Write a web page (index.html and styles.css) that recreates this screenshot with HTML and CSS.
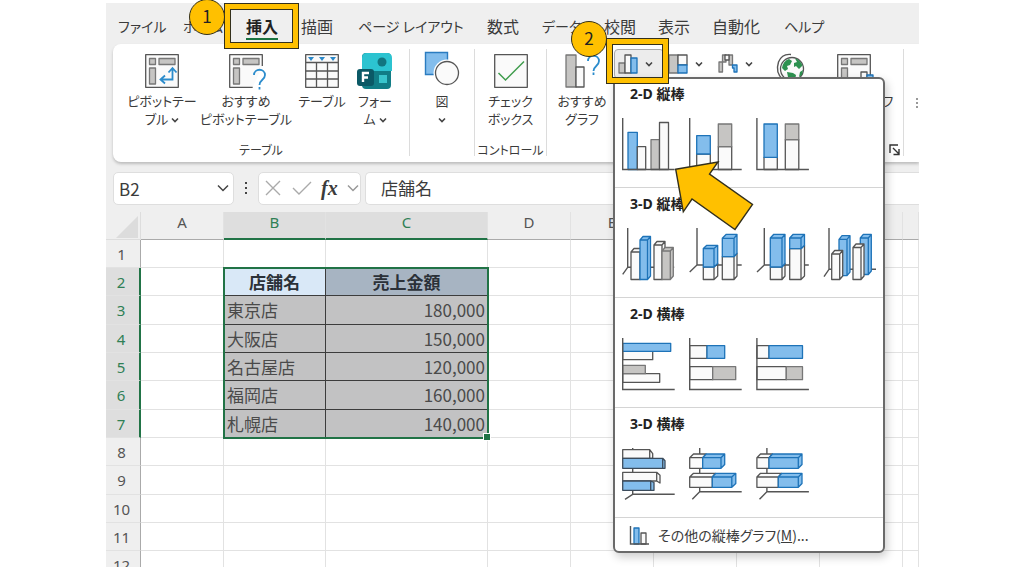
FILE: index.html
```html
<!DOCTYPE html>
<html lang="ja">
<head>
<meta charset="utf-8">
<title>売上金額</title>
<link rel="stylesheet" href="styles.css">
</head>
<body>
<main class="page">
  <div class="app">
    <nav class="tabs">
      <button class="tab kana">ファイル</button>
      <button class="tab kana">ホーム</button>
      <button class="tab active">挿入</button>
      <button class="tab">描画</button>
      <button class="tab kana">ページ レイアウト</button>
      <button class="tab">数式</button>
      <button class="tab kana">データ</button>
      <button class="tab">校閲</button>
      <button class="tab">表示</button>
      <button class="tab">自動化</button>
      <button class="tab kana">ヘルプ</button>
    </nav>

    <div class="ribbon">
      <section class="group tables">
        <div class="tools">
          <button class="tool">
            <svg class="icon" viewBox="0 0 34 34"><rect class="w" x=".7" y=".7" width="32.6" height="32.6"/><path class="g" d="M4.500 4.500h6v6h-6zM14 4.500h16v6H14zM4.500 14h6v16h-6z"/><path class="bl" d="M16 25.500h11.500V15M20 21.500l-4.500 4 4.500 4M23.500 18.500l4-4.500 4 4.500"/></svg>
            <span>ピボットテー<br>ブル <svg class="chev" viewBox="0 0 8 6"><path d="M1 1.500l3 3 3-3"/></svg></span>
          </button>
          <button class="tool wide">
            <svg class="icon" viewBox="0 0 34 34"><path class="w" d="M33.300 12V.7H.7v32.600h23"/><path class="g" d="M4.500 4.500h6v6h-6zM14 4.500h16v6H14zM4.500 14h6v16h-6z"/><path class="bl" d="M25 21c0-7 11-7 11 0 0 5-5.500 4.500-5.500 10M30.500 33v2.500"/></svg>
            <span>おすすめ<br>ピボットテーブル</span>
          </button>
          <button class="tool mid">
            <svg class="icon" viewBox="0 0 34 34"><path class="w" d="M.7.7h32.600v32.600H.7zM.7 8.500h32.600M.7 17h32.600M.7 25h32.600M11.500 8.500v25M22.500 8.500v25"/><path fill="#2b88c8" d="M3 3h6L6 7zM14 3h6l-3 4zM25 3h6l-3 4z"/></svg>
            <span>テーブル</span>
          </button>
          <button class="tool small">
            <svg class="icon" viewBox="0 0 34 34"><rect x="4" y="-1" width="29" height="36" rx="4" fill="#117d86"/><path d="M9-1h20q5 0 5 5v13H4V4q0-5 5-5z" fill="#2cc3d0"/><circle cx="24" cy="8" r="4.500" fill="#12757f"/><path d="M21 21h8v8h-8z" fill="#39c5cc"/><rect x="-1" y="15" width="17" height="17" rx="3" fill="#0b5966"/><path d="M5 28v-9h6M5 23.500h5" fill="none" stroke="#fff" stroke-width="2.400"/></svg>
            <span>フォー<br>ム <svg class="chev" viewBox="0 0 8 6"><path d="M1 1.500l3 3 3-3"/></svg></span>
          </button>
        </div>
        <h2 class="caption">テーブル</h2>
      </section>
      <section class="group shapes">
        <div class="tools">
          <button class="tool">
            <svg class="icon" viewBox="0 0 34 34"><path fill="#83bdec" stroke="#2b7cc0" stroke-width="1.400" d="M.5-1.500h22v22H.5z"/><circle cx="22" cy="19" r="13.500" fill="#fff"/><circle class="w" cx="22" cy="19" r="11.500"/></svg>
            <span>図<br><svg class="chev" viewBox="0 0 8 6"><path d="M1 1.500l3 3 3-3"/></svg></span>
          </button>
        </div>
      </section>
      <section class="group controls">
        <div class="tools">
          <button class="tool">
            <svg class="icon" viewBox="0 0 34 34"><path class="w" d="M.7.7h32.600v32.600H.7z"/><path fill="none" stroke="#3f9c4d" stroke-width="1.500" d="M4.500 19l7 7L30 7.500"/></svg>
            <span>チェック<br>ボックス</span>
          </button>
        </div>
        <h2 class="caption">コントロール</h2>
      </section>
      <section class="group charts">
        <div class="tools">
          <button class="tool rec">
            <svg class="icon" viewBox="0 0 34 34"><path class="g" d="M1 1h10v32H1z"/><path class="w" d="M11 13h8v20h-8z"/><path class="bl" d="M23 7c0-7 11-7 11 0 0 5-5.500 5-5.500 10M28.500 18.500V21"/></svg>
            <span>おすすめ<br>グラフ</span>
          </button>
          <button class="mini open" aria-label="縦棒/横棒グラフの挿入">
            <svg class="minicon" viewBox="0 0 20 20"><path class="g" d="M1 9h6v10H1z"/><path class="w" d="M7 1h6v18H7z"/><path class="b" d="M13 4h6v15h-6z"/></svg>
            <svg class="chev" viewBox="0 0 8 6"><path d="M1 1.500l3 3 3-3"/></svg>
          </button>
          <button class="mini" aria-label="階層構造グラフの挿入">
            <svg class="minicon" viewBox="0 0 20 20"><path class="g" d="M1 1h9v18H1z"/><path class="w" d="M10 1h9v10h-9z"/><path class="b" d="M10 11h9v8h-9z"/></svg>
            <svg class="chev" viewBox="0 0 8 6"><path d="M1 1.500l3 3 3-3"/></svg>
          </button>
          <button class="mini" aria-label="ウォーターフォール図の挿入">
            <svg class="minicon" viewBox="0 0 20 20"><path class="g" d="M1 8h3.500v10H1zM4.500 1H8v7H4.500zM11 1h3.500v10H11z"/><path class="w" d="M7 1h4v5H7z"/><path class="b" d="M14.500 11H19v7h-3v-4h-1.500z"/></svg>
            <svg class="chev" viewBox="0 0 8 6"><path d="M1 1.500l3 3 3-3"/></svg>
          </button>
          <button class="tool map" aria-label="マップ">
            <svg class="icon" viewBox="0 0 34 34"><circle class="w" cx="17" cy="15" r="11.500"/><path fill="#2d9150" d="M7 14q1-7 7-9l3 2-2 4-3 1 1 3-3 2zM20 4.500q5 1 7.500 7L24 15l-3-3-2 1v-4l3-1zM12 18l6 1 3 2-1 5h-5l-2-3zM25 18l3-2-1 5-3 2z"/><path class="n" d="M16 .5Q7-.5 3.500 8 0 19 8 25.500"/></svg>
          </button>
          <button class="tool pivotchart">
            <svg class="icon" viewBox="0 0 34 34"><path class="w" d="M.7.7h32.600v32.600H.7z"/><path class="g" d="M4.500 4.500h6v6h-6zM14 4.500h16v6H14zM4.500 14h6v16h-6z"/><path class="w" d="M24 18h6v15h-6z"/><path class="b" d="M30 21h6v12h-6z"/></svg>
            <span>ピボットグラフ</span>
          </button>
        </div>
        <h2 class="caption">グラフ</h2>
        <button class="launcher" aria-label="グラフの詳細"><svg viewBox="0 0 12 12"><path d="M1 9V1h8M4 4l6 6M10 5v5.500H4.500"/></svg></button>
      </section>
      <svg class="more" viewBox="0 0 3 12"><path d="M0 1h2v2H0zM0 5h2v2H0zM0 9h2v2H0z"/></svg>
    </div>

    <div class="formula-bar">
      <div class="box name-box">
        <input class="name-input" value="B2" aria-label="名前ボックス">
        <svg class="drop" viewBox="0 0 12 8"><path d="M1 1.500l5 5 5-5"/></svg>
      </div>
      <svg class="dots" viewBox="0 0 4 14"><path d="M1 1h2v2H1zM1 6h2v2H1zM1 11h2v2H1z"/></svg>
      <div class="box fx-box">
        <button class="fx-btn" aria-label="キャンセル"><svg viewBox="0 0 20 16"><path d="M3 1l14 14M17 1L3 15"/></svg></button>
        <button class="fx-btn" aria-label="入力"><svg viewBox="0 0 20 16"><path d="M1 8l6 6L19 2"/></svg></button>
        <button class="fx">fx</button>
        <svg class="drop pale" viewBox="0 0 12 8"><path d="M1 1.500l5 5 5-5"/></svg>
      </div>
      <input class="box formula" value="店舗名" aria-label="数式バー">
    </div>

    <div class="sheet">
      <table class="grid">
        <colgroup><col class="c-head"><col class="c-std"><col class="c-b"><col class="c-c"><col class="c-std"><col class="c-std"><col class="c-std"><col class="c-std"><col class="c-std"><col></colgroup>
        <thead><tr><th class="corner"><svg viewBox="0 0 22 22"><path d="M22 0v22H0z"/></svg></th><th>A</th><th class="sel">B</th><th class="sel">C</th><th>D</th><th>E</th><th>F</th><th>G</th><th>H</th><th></th></tr></thead>
        <tbody>
          <tr><th>1</th><td></td><td></td><td></td><td></td><td></td><td></td><td></td><td></td><td></td></tr>
          <tr><th class="sel">2</th><td></td><td class="title first">店舗名</td><td class="title">売上金額</td><td></td><td></td><td></td><td></td><td></td><td></td></tr>
          <tr><th class="sel">3</th><td></td><td class="data">東京店</td><td class="data num">180,000</td><td></td><td></td><td></td><td></td><td></td><td></td></tr>
          <tr><th class="sel">4</th><td></td><td class="data">大阪店</td><td class="data num">150,000</td><td></td><td></td><td></td><td></td><td></td><td></td></tr>
          <tr><th class="sel">5</th><td></td><td class="data">名古屋店</td><td class="data num">120,000</td><td></td><td></td><td></td><td></td><td></td><td></td></tr>
          <tr><th class="sel">6</th><td></td><td class="data">福岡店</td><td class="data num">160,000</td><td></td><td></td><td></td><td></td><td></td><td></td></tr>
          <tr><th class="sel">7</th><td></td><td class="data">札幌店</td><td class="data num">140,000</td><td></td><td></td><td></td><td></td><td></td><td></td></tr>
          <tr><th>8</th><td></td><td></td><td></td><td></td><td></td><td></td><td></td><td></td><td></td></tr>
          <tr><th>9</th><td></td><td></td><td></td><td></td><td></td><td></td><td></td><td></td><td></td></tr>
          <tr><th>10</th><td></td><td></td><td></td><td></td><td></td><td></td><td></td><td></td><td></td></tr>
          <tr><th>11</th><td></td><td></td><td></td><td></td><td></td><td></td><td></td><td></td><td></td></tr>
          <tr><th>12</th><td></td><td></td><td></td><td></td><td></td><td></td><td></td><td></td><td></td></tr>
        </tbody>
      </table>
      <div class="selection"></div>
    </div>
  </div>

  <div class="menu">
    <section class="kind">
      <h3>2-D 縦棒</h3>
      <div class="choices">
        <button aria-label="集合縦棒"><svg viewBox="0 0 54 54"><path class="b" d="M6 14.300h9.300v37.200H6z"/><path class="w" d="M15.300 28.700h8.400v22.800h-8.400z"/><path class="g" d="M29 21.700h8.500v29.800H29z"/><path class="w" d="M37.500 4.500h9v47h-9z"/><path class="n" d="M.7 0v51.500h52"/></svg></button>
        <button aria-label="積み上げ縦棒"><svg viewBox="0 0 54 54"><path class="w" d="M7.700 36h13.600v15.500H7.700zM29.300 28.700h13.400v22.800H29.300z"/><path class="b" d="M7.700 17.700h13.600V36H7.700z"/><path class="g" d="M29.300 6h13.400v22.700H29.300z"/><path class="n" d="M.7 0v51.500h52"/></svg></button>
        <button aria-label="100% 積み上げ縦棒"><svg viewBox="0 0 54 54"><path class="w" d="M8 39.300h13.300v12.200H8zM29.300 21.700h13.500v29.800H29.300z"/><path class="b" d="M8 6h13.300v33.300H8z"/><path class="g" d="M29.300 6h13.500v15.700H29.300z"/><path class="n" d="M.9 0v51.500h52"/></svg></button>
      </div>
    </section>
    <section class="kind">
      <h3>3-D 縦棒</h3>
      <div class="choices">
        <button aria-label="3-D 集合縦棒"><svg viewBox="0 0 54 54"><path class="n" d="M5.700 0v39.300L.7 46.300M5.700 39.300h46.500"/><path class="w" d="M9 51.500V24l3-3.500h9v28l-3 3zM9 24h9v27.500M18 24l3-3.500"/><path class="b" d="M18 51.500V12l3-3.500h7.500v39.500l-3 3.500zM18 12h7.500v39.500M25.500 12l3-3.500"/><path class="w" d="M32 51.500V17l3-3.500h8v34.500l-3 3.500zM32 17h8v34.500M40 17l3-3.500"/><path class="g" d="M40 51.500V23l3-3.500h8.300v28.500l-3 3.500zM40 23h8.300v28.500M48.300 23l3-3.500"/></svg></button>
        <button aria-label="3-D 積み上げ縦棒"><svg viewBox="0 0 54 54"><path class="n" d="M8 0v37L.7 44M8 37h44.700"/><path class="w" d="M14.300 51.500V39H25l3.700-3.500V48L25 51.500zM25 39v12.500M33.300 51.500V28.700H45l3-3.500V48l-3 3.500zM45 28.700v22.800"/><path class="b" d="M14.300 39V20.500l3.500-3.200h10.900v18.200L25 39zM14.300 20.500H25V39M25 20.500l3.700-3.200M33.300 28.700V10.300l4-4H48v19l-3 3.400zM33.300 10.300H45v18.400M45 10.300l3-4"/></svg></button>
        <button aria-label="3-D 100% 積み上げ縦棒"><svg viewBox="0 0 54 54"><path class="n" d="M8.300 0v37L1 44M8.300 37h44.500"/><path class="w" d="M14.300 51.500V39H26l3-3.500V48l-3 3.500zM26 39v12.500M33.700 51.500V20.700H45l3.500-3.500V48L45 51.500zM45 20.700v30.800"/><path class="b" d="M14.300 39V10l3.500-3.700H29v29.200L26 39zM14.300 10H26v29M26 10l3-3.700M33.700 20.700V10l3.500-3.700h11.300v11L45 20.700zM33.700 10H45v10.700M45 10l3.500-3.700"/></svg></button>
        <button aria-label="3-D 縦棒"><svg viewBox="0 0 54 54"><path class="n" d="M6 0v41.300l-5 7.400M6 41.300h47"/><path class="b" d="M16 47.700V11.300l3-3.600h8v36.400l-3 3.600zM16 11.300h8v36.400M24 11.300l3-3.600M37.300 46.500V10l3-3.600h8V43l-3 3.500zM37.300 10h8v36.500M45.300 10l3-3.600"/><path class="w" d="M8.700 51.500V26l3-3.500h8V48l-3 3.500zM8.700 26h8v25.500M16.700 26l3-3.500M30 51.500v-32l3-3.500h8v32l-3 3.500zM30 19.500h8v32M38 19.500l3-3.500"/></svg></button>
      </div>
    </section>
    <section class="kind">
      <h3>2-D 横棒</h3>
      <div class="choices">
        <button aria-label="集合横棒"><svg viewBox="0 0 54 54"><path class="w" d="M.7 13.300h30v8.400H.7zM.7 35.700h37v8.600H.7z"/><path class="b" d="M.7 5.300h48v8H.7z"/><path class="g" d="M.7 27.300h22.600v8.400H.7z"/><path class="n" d="M.7 0v51.500h52"/></svg></button>
        <button aria-label="積み上げ横棒"><svg viewBox="0 0 54 54"><path class="w" d="M.7 7.700H18v12.600H.7zM.7 28.700h23v13H.7z"/><path class="b" d="M18 7.700h17.700v12.600H18z"/><path class="g" d="M23.700 28.700h23v13h-23z"/><path class="n" d="M.7 0v51.500h52"/></svg></button>
        <button aria-label="100% 積み上げ横棒"><svg viewBox="0 0 54 54"><path class="w" d="M.9 7.700H13v12.600H.9zM.9 28.700h29.400v13H.9z"/><path class="b" d="M13 7.700h33.500v12.600H13z"/><path class="g" d="M30.300 28.700h16.200v13H30.300z"/><path class="n" d="M.9 0v51.500h52"/></svg></button>
      </div>
    </section>
    <section class="kind">
      <h3>3-D 横棒</h3>
      <div class="choices">
        <button aria-label="3-D 集合横棒"><svg viewBox="0 0 54 54"><path class="n" d="M10.700 0v46.300l-7.700 5M10.700 46.300h42"/><path class="w" d="M.7 1.700h27l3 4v4.600h-30zM27.700 1.700v8.600M.7 24.300h34l3.300 3V35l-3.300-2H.7zM34.700 24.300V33"/><path class="b dark" d="M.7 10.300h40l2.300 2.500v7.500H.7zM40.700 10.300v10M.7 33h28l3.300 1.500v7.800H.7zM28.700 33v9.300"/></svg></button>
        <button aria-label="3-D 積み上げ横棒"><svg viewBox="0 0 54 54"><path class="n" d="M10.700 0v43.700l-7.400 7.600M10.700 43.700h42"/><path class="w" d="M.7 9.700L4.500 6h12.700l-3.500 3.700v10.600h-13zM.7 9.700h13M.7 29l3.800-3.700h22L23.300 29v10.300H.7zM.7 29h22.600"/><path class="b" d="M13.700 9.700L17.200 6h18.500v10.500L32 20.300H13.700zM13.700 9.700H32v10.600M32 9.700L35.700 6M23.300 29l3.500-3.700h20v10.200l-4 3.800H23.300zM23.300 29h19.500v10.300M42.800 29l4-3.700"/></svg></button>
        <button aria-label="3-D 100% 積み上げ横棒"><svg viewBox="0 0 54 54"><path class="n" d="M10.900 0v43.700l-7.400 7.600M10.900 43.700h42"/><path class="w" d="M.9 9.700L4.500 6h12L13 9.700v10.600H.9zM.9 9.700H13M.9 29l3.600-3.700h21L22.300 29v10.300H.9zM.9 29h21.400"/><path class="b" d="M13 9.700L16.500 6H46v10.500l-3.700 3.800H13zM13 9.700h29.300v10.600M42.300 9.700L46 6M22.300 29l3.500-3.700H46v10.200l-3.700 3.800h-20zM22.300 29h20v10.300M42.300 29l3.700-3.700"/></svg></button>
      </div>
    </section>
    <button class="others">
      <svg viewBox="0 0 20 20"><path class="b" d="M5 3h5v16H5z"/><path class="w" d="M12 8h5v11h-5z"/><path class="n" d="M1.500 1v18H20"/></svg>
      <span>その他の縦棒グラフ(<u>M</u>)...</span>
    </button>
  </div>

  <div class="frame frame-1"></div>
  <div class="frame frame-2"></div>
  <div class="step step-1">1</div>
  <div class="step step-2">2</div>
  <svg class="arrow" viewBox="0 0 80 70"><path d="M1.700 8.200L44 1l-8.500 12L78.500 43.500 61 68.500 18 38 9.300 50.800z"/></svg>
</main>
</body>
</html>
```
FILE: styles.css
```css
* { box-sizing: border-box; }

body {
  margin: 0;
  background: #fff;
  color: #3b3b3b;
  font-family: "Noto Sans CJK JP", "Noto Sans", sans-serif;
  font-size: 13px;
}

button, input {
  margin: 0;
  padding: 0;
  border: 0;
  background: none;
  color: inherit;
  font: inherit;
}

svg { display: block; overflow: visible; }
h2, h3 { margin: 0; font: inherit; }

.w, .g, .b { stroke-width: 1.3; stroke-linejoin: round; }
.w { fill: #fafafa; stroke: #555; }
.g { fill: #c6c5c3; stroke: #777; }
.b { fill: #83bdec; stroke: #1e73b8; }
.dark { stroke: #3c4c5c; }
.n { fill: none; stroke: #555; stroke-width: 1.4; }
.bl { fill: none; stroke: #2b8ccc; stroke-width: 1.8; }

.page {
  position: relative;
  height: 100vh;
  padding: 3px 105px 9px 106px;
  overflow: hidden;
}

.app {
  display: flex;
  flex-direction: column;
  height: 100%;
  overflow: hidden;
  background: #efefef;
}

/* Ribbon tabs */
.tabs {
  display: grid;
  grid-template-columns: 65px 63px 55px 57px 129px 55px 62px 54px 54px 72px 1fr;
  height: 41px;
  padding: 5px 0 0 12px;
}
.tab {
  justify-self: start;
  font-size: 16px;
  line-height: 36px;
  white-space: nowrap;
  text-align: left;
}
.kana { font-size: 14px; font-feature-settings: "palt"; }
.active {
  align-self: start;
  height: 32px;
  border-bottom: 2px solid #1a7340;
  color: #222;
  font-weight: 700;
}

/* Ribbon body */
.ribbon {
  display: flex;
  flex: none;
  height: 118px;
  margin-left: 7px;
  background: #fff;
  border-radius: 8px 0 0 8px;
  box-shadow: 0 2px 3px #bdbdbd;
  font-feature-settings: "palt";
}
.group {
  position: relative;
  display: flex;
  flex: none;
  flex-direction: column;
  justify-content: space-between;
  margin: 5px 0 6px;
  border-right: 1px solid #dcdcdc;
}
.tables { width: 297px; padding-left: 10px; }
.shapes { width: 65px; }
.controls { width: 72px; }
.charts { width: 357px; padding-left: 3px; }
.tools { display: flex; align-items: flex-start; }
.tool {
  display: flex;
  flex-direction: column;
  align-items: center;
  gap: 4px;
  width: 78px;
  padding-top: 5px;
  line-height: 18px;
  white-space: nowrap;
}
.tool.wide { width: 90px; }
.tool.mid { width: 62px; }
.tool.small { width: 44px; }
.shapes .tool { width: 64px; }
.controls .tool { width: 71px; }
.tool.rec { width: 64px; }
.tool.map { width: 48px; margin-left: 4px; }
.tool.pivotchart { width: 72px; margin-left: 2px; }
.icon { width: 34px; height: 34px; }
.chev {
  display: inline-block;
  width: 8px;
  height: 6px;
  vertical-align: middle;
  fill: none;
  stroke: #444;
  stroke-width: 1.6;
}
.caption {
  margin-bottom: -3px;
  font-size: 12px;
  line-height: 18px;
  text-align: center;
  white-space: nowrap;
}
.tables .caption { margin-left: -10px; }
.mini {
  display: flex;
  align-items: center;
  gap: 7px;
  width: 50px;
  height: 30px;
  padding-left: 4px;
}
.mini.open { background: #ececec; border: 1px solid #aaa; border-radius: 4px; padding-left: 3px; }
.minicon { width: 20px; height: 20px; }
.launcher {
  position: absolute;
  right: 2px;
  bottom: 0;
  width: 12px;
  height: 12px;
}
.launcher path { fill: none; stroke: #333; stroke-width: 1.4; }
.more { width: 3px; height: 12px; margin: 53px 0 0 auto; fill: #999; }

/* Formula bar */
.formula-bar {
  display: flex;
  flex: none;
  align-items: center;
  height: 50px;
  padding: 2px 0 0 7px;
}
.box {
  height: 33px;
  background: #fff;
  border: 1px solid #dedede;
  border-radius: 5px;
  font-size: 17px;
}
.name-box { display: flex; align-items: center; width: 121px; padding: 0 4px 0 5px; }
.name-input { flex: 1; min-width: 0; }
.drop { flex: none; width: 12px; height: 8px; fill: none; stroke: #444; stroke-width: 1.5; }
.pale { stroke: #999; }
.dots { width: 4px; height: 14px; margin: 0 10px 0 10px; fill: #444; }
.fx-box { display: flex; align-items: center; gap: 9px; width: 103px; padding: 0 2px 0 4px; }
.fx-btn svg { width: 20px; height: 16px; fill: none; stroke: #aaa; stroke-width: 1.4; }
.fx { flex: 1; font: italic 700 20px "Liberation Serif", serif; text-align: center; }
.formula { flex: 1; min-width: 0; margin-left: 4px; padding: 0 15px 2px; border-right: 0; border-radius: 5px 0 0 5px; }

/* Worksheet */
.sheet { position: relative; flex: none; }
.grid {
  width: 100%;
  table-layout: fixed;
  border-spacing: 0;
  background: #fff;
  font-size: 17px;
}
.c-head { width: 35px; }
.c-std { width: 83px; }
.c-b { width: 102px; }
.c-c { width: 162px; }
.grid th, .grid td {
  height: 28px;
  padding: 0;
  border-right: 1px solid #e2e2e2;
  border-bottom: 1px solid #e2e2e2;
  line-height: 24px;
  white-space: nowrap;
  overflow: hidden;
}
.grid tbody tr:nth-child(3n) > * { height: 29px; }
.grid th {
  background: #efefef;
  color: #555;
  font: 400 15px/24px "Noto Sans", "Noto Sans CJK JP", sans-serif;
}
.grid thead th { border-bottom-color: #aaa; vertical-align: top; line-height: 20px; }
.grid thead th.sel { background: #dedede; border-bottom: 2px solid #217346; color: #2f8055; }
.grid tbody th { padding-right: 3px; border-right-color: #aaa; }
.grid tbody th.sel { background: #dedede; border-right: 2px solid #217346; color: #2f8055; }
.grid thead .corner { padding: 4px 0 0 10px; border-right-color: #ddd; border-bottom-color: #ddd; }
.corner svg { width: 22px; height: 22px; fill: #dcdcdc; }
.grid td.data, .grid td.title { border-color: #3c3c3c; background: #c2c2c3; }
.grid td.data { padding: 0 2px 0 3px; color: #4a4a4a; }
.grid td.num { text-align: right; }
.grid td.title { background: #a7b4c2; color: #2b3138; font-weight: 700; text-align: center; }
.grid td.first { background: #d9e8f7; }
.selection {
  position: absolute;
  left: 117px;
  top: 55px;
  width: 266px;
  height: 172px;
  border: 2px solid #217346;
}
.selection::after {
  content: "";
  position: absolute;
  right: -3px;
  bottom: -3px;
  width: 6px;
  height: 6px;
  background: #217346;
  outline: 1px solid #fff;
}

/* Chart gallery menu */
.menu {
  position: absolute;
  left: 613px;
  top: 77px;
  width: 272px;
  background: #fff;
  border: 2px solid #6a6a6a;
  border-radius: 6px;
  box-shadow: 2px 4px 10px #0003;
}
.kind { padding: 6px 0 15px 7px; border-bottom: 1px solid #d4d4d4; }
.kind:first-child { padding-top: 5px; }
.kind h3 {
  padding-left: 8px;
  color: #222;
  font: 700 14px/20px "Noto Sans", "Noto Sans CJK JP", sans-serif;
}
.choices { display: flex; gap: 13px; margin-top: 14px; }
.choices svg { width: 54px; height: 54px; }
.others {
  display: flex;
  align-items: center;
  gap: 9px;
  width: 100%;
  height: 33px;
  padding-left: 14px;
  font-size: 14px;
  font-feature-settings: "palt";
}
.others svg { width: 20px; height: 20px; }

/* Step annotations */
.frame {
  position: absolute;
  border: 5px solid #ffc000;
  outline: 1px solid #33301c;
  box-shadow: inset 0 0 0 1px #33301c;
}
.frame-1 { left: 225px; top: 4px; width: 73px; height: 44px; }
.frame-2 { left: 607px; top: 39px; width: 61px; height: 44px; }
.step {
  position: absolute;
  width: 36px;
  height: 36px;
  border: 1px solid #33301c;
  border-radius: 50%;
  background: #ffc000;
  color: #222;
  font-size: 17px;
  line-height: 32px;
  text-align: center;
}
.step-1 { left: 189px; top: -1px; }
.step-2 { left: 571px; top: 21px; }
.arrow { position: absolute; left: 674px; top: 161px; width: 80px; height: 70px; }
.arrow path { fill: #ffc000; stroke: #33301c; stroke-width: 1.4; }
```
